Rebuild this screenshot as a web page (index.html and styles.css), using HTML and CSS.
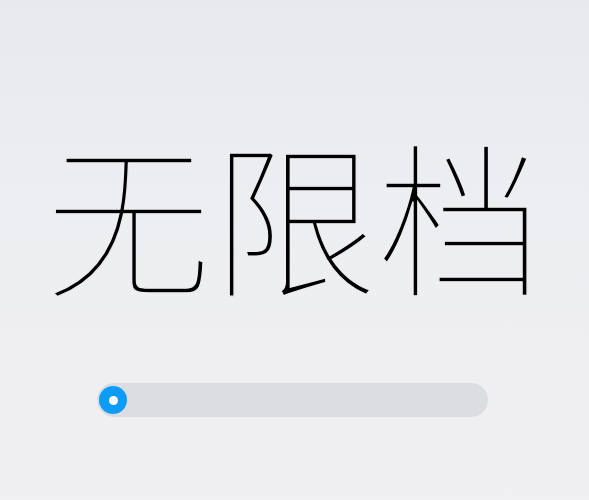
FILE: index.html
```html
<!DOCTYPE html>
<html lang="zh">
<head>
<meta charset="utf-8">
<link rel="stylesheet" href="styles.css">
</head>
<body>
<main class="stage">
  <h1 class="title">无限档</h1>
  <div class="slider">
    <div class="knob"><span class="dot"></span></div>
  </div>
</main>
</body>
</html>
```
FILE: styles.css
```css
html, body {
  margin: 0;
  padding: 0;
  width: 589px;
  height: 500px;
  overflow: hidden;
}
body {
  background: linear-gradient(180deg, #e8e9ec 0%, #edeef1 40%, #f0f0f3 100%);
}
.stage {
  display: flex;
  flex-direction: column;
  align-items: center;
  height: 500px;
}
.title {
  margin: 129px 0 0 0;
  font-family: "Noto Sans CJK SC", sans-serif;
  font-weight: 100;
  font-size: 166px;
  line-height: 166px;
  color: #000;
  letter-spacing: 0;
  -webkit-text-stroke: 1.3px #edeef1;
  paint-order: fill stroke;
}
.slider {
  margin-top: 88px;
  margin-right: 4px;
  width: 391px;
  height: 34px;
  border-radius: 17px;
  background: #dcdde0;
  display: flex;
  align-items: center;
  padding-left: 2px;
  box-sizing: border-box;
}
.knob {
  width: 28px;
  height: 28px;
  border-radius: 50%;
  background: #0b9cf8;
  display: flex;
  align-items: center;
  justify-content: center;
}
.dot {
  width: 9px;
  height: 9px;
  border-radius: 50%;
  background: #fff;
}
```
